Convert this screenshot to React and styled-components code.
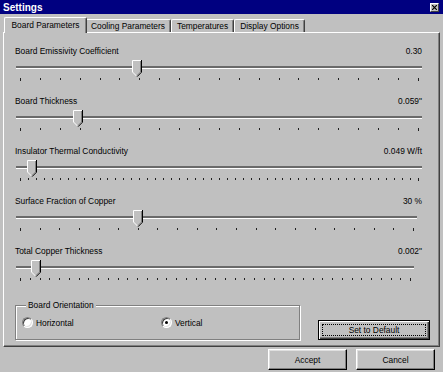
import React from 'react';
import styled, { createGlobalStyle } from 'styled-components';

const GlobalStyle = createGlobalStyle`
    html, body {
        margin: 0;
        padding: 0;
        background: #c0c0c0;
    }
    body {
        font-family: "Liberation Sans", Arial, sans-serif;
        font-size: 8.4px;
        color: #000;
    }
`;

const Window = styled.div`
    width: 443px;
    height: 372px;
    background: #c0c0c0;
    display: flex;
    flex-direction: column;
    overflow: hidden;
`;

const TitleBar = styled.div`
    height: 14px;
    background: #000080;
    color: #fff;
    font-weight: bold;
    font-size: 10px;
    display: flex;
    align-items: center;
    justify-content: space-between;
    padding: 0 4px 0 3px;
`;

const CloseButton = styled.div`
    width: 9px;
    height: 9px;
    box-sizing: border-box;
    background: #c0c0c0;
    border: 1px solid;
    border-color: #fff #404040 #404040 #fff;
    display: flex;
    align-items: center;
    justify-content: center;
`;

const Body = styled.div`
    padding: 3px 3px 0 3px;
`;

const TabStrip = styled.div`
    display: flex;
    align-items: flex-end;
    height: 15px;
    padding-left: 3px;
    position: relative;
    z-index: 1;
`;

const Tab = styled.div`
    box-sizing: border-box;
    height: ${p => (p.active ? '16px' : '13px')};
    margin: 0 ${p => (p.active ? '-2px' : '0')} ${p => (p.active ? '-1px' : '0')};
    padding: 0 ${p => (p.active ? '6.5px' : '5px')};
    background: #c0c0c0;
    border-left: 1px solid #fff;
    border-top: 1px solid #fff;
    border-right: 1px solid #404040;
    box-shadow: inset -1px 0 0 #808080;
    border-radius: 2px 2px 0 0;
    display: flex;
    align-items: ${p => (p.active ? 'flex-start' : 'center')};
    padding-top: ${p => (p.active ? '2px' : '0')};
    position: relative;
    z-index: ${p => (p.active ? 2 : 0)};
    white-space: nowrap;
`;

const Panel = styled.div`
    box-sizing: border-box;
    height: 315px;
    border-left: 1px solid #fff;
    border-top: 1px solid #fff;
    border-right: 1px solid #404040;
    border-bottom: 1px solid #404040;
    box-shadow: inset -1px -1px 0 #808080;
    padding: 12px 17px 0 11px;
    display: flex;
    flex-direction: column;
`;

const SliderBlock = styled.div`
    height: 50px;
    display: flex;
    flex-direction: column;
`;

const LabelRow = styled.div`
    height: 12px;
    line-height: 12px;
    display: flex;
    justify-content: space-between;
    white-space: nowrap;
`;

const TrackArea = styled.div`
    position: relative;
    height: 17px;
    margin: 3px 0 0 1px;
    width: ${p => p.width}px;
`;

const Track = styled.div`
    margin-top: 6px;
    height: 2px;
    background: #6a6a6a;
    border-bottom: 1px solid #fff;
`;

const ThumbWrap = styled.div`
    position: absolute;
    top: 0;
    width: 10px;
    height: 17px;
`;

const Ticks = styled.div`
    box-sizing: border-box;
    display: flex;
    justify-content: space-between;
    align-items: flex-start;
    margin: 1px 0 0 1px;
    padding: 0 3px 0 4px;
    width: ${p => p.width}px;
`;

const Tick = styled.div`
    width: 1px;
    height: ${p => (p.end ? '3px' : '2px')};
    background: #202020;
`;

const BottomRow = styled.div`
    display: flex;
    justify-content: space-between;
    align-items: flex-end;
    margin: 4px -8px 0 0;
`;

const GroupBox = styled.fieldset`
    box-sizing: border-box;
    width: 285px;
    height: 41px;
    margin: 0;
    padding: 0 6px;
    min-width: 0;
    border: 1px solid #808080;
    box-shadow: 1px 1px 0 #fff, inset 1px 1px 0 #fff;
`;

const Legend = styled.legend`
    padding: 0 2px;
    margin-left: 4px;
    line-height: 12px;
    background: #c0c0c0;
`;

const RadioRow = styled.div`
    display: flex;
    align-items: center;
    padding-top: 6px;
`;

const RadioOption = styled.label`
    display: flex;
    align-items: center;
    gap: 3px;
    width: ${p => p.width}px;
`;

const RadioCircle = styled.span`
    box-sizing: border-box;
    width: 11px;
    height: 11px;
    border-radius: 50%;
    border: 1px solid;
    border-color: #808080 #fff #fff #808080;
    box-shadow: inset 1px 1px 0 #404040, inset -1px -1px 0 #dfdfdf;
    background: #fff;
    display: flex;
    align-items: center;
    justify-content: center;
    &::after {
        content: "";
        width: 3px;
        height: 3px;
        border-radius: 50%;
        background: ${p => (p.checked ? '#000' : 'transparent')};
    }
`;

const Button = styled.div`
    box-sizing: border-box;
    width: ${p => p.width}px;
    height: ${p => p.height}px;
    background: #c0c0c0;
    border: 1px solid;
    border-color: #fff #000 #000 #fff;
    box-shadow: inset -1px -1px 0 #808080, inset 1px 1px 0 #dfdfdf;
    display: flex;
    align-items: center;
    justify-content: center;
`;

const DefaultButton = styled(Button)`
    border: 1px solid #000;
    box-shadow: inset 1px 1px 0 #fff, inset -1px -1px 0 #404040, inset -2px -2px 0 #808080;
    padding: 3px;
    align-items: stretch;
    justify-content: stretch;
`;

const FocusRing = styled.span`
    flex: 1;
    border: 1px dotted #000;
    display: flex;
    align-items: center;
    justify-content: center;
`;

const DialogButtons = styled.div`
    display: flex;
    justify-content: flex-end;
    gap: 9px;
    padding: 2px 5px 0 0;
`;

const sliders = [
    { label: 'Board Emissivity Coefficient', value: '0.30', pos: 116, ticks: 21, width: 406 },
    { label: 'Board Thickness', value: '0.059"', pos: 57, ticks: 21, width: 406 },
    { label: 'Insulator Thermal Conductivity', value: '0.049 W/ft', pos: 11, ticks: 51, width: 406 },
    { label: 'Surface Fraction of Copper', value: '30 %', pos: 117, ticks: 21, width: 401 },
    { label: 'Total Copper Thickness', value: '0.002"', pos: 15, ticks: 41, width: 398 },
];

const tabs = ['Board Parameters', 'Cooling Parameters', 'Temperatures', 'Display Options'];

function Thumb({ left }) {
    return <ThumbWrap style={{ left }}>
        <svg width="10" height="17" viewBox="0 0 10 17">
            <polygon points="0,0 10,0 10,12 5,17 0,12" fill="#c0c0c0" />
            <polyline points="0.5,12 0.5,0.5 9,0.5" fill="none" stroke="#fff" />
            <line x1="0.5" y1="12" x2="5" y2="16.5" stroke="#fff" />
            <polyline points="9.5,0 9.5,12.2 5,16.7" fill="none" stroke="#000" />
            <polyline points="8.5,1 8.5,12 5,15.5" fill="none" stroke="#808080" />
        </svg>
    </ThumbWrap>;
}

function Slider({ label, value, pos, ticks, width }) {
    return <SliderBlock>
        <LabelRow>
            <span>{label}</span>
            <span>{value}</span>
        </LabelRow>
        <TrackArea width={width}>
            <Track />
            <Thumb left={pos} />
        </TrackArea>
        <Ticks width={width}>
            {Array.from({ length: ticks }, (_, i) =>
                <Tick key={i} end={i === 0 || i === ticks - 1} />
            )}
        </Ticks>
    </SliderBlock>;
}

function App() {
    return <Window>
        <GlobalStyle />
        <TitleBar>
            <span>Settings</span>
            <CloseButton>
                <svg width="5" height="5" viewBox="0 0 5 5">
                    <path d="M0 0 L5 5 M5 0 L0 5" stroke="#000" strokeWidth="1.2" />
                </svg>
            </CloseButton>
        </TitleBar>
        <Body>
            <TabStrip>
                {tabs.map((t, i) => <Tab key={t} active={i === 0}>{t}</Tab>)}
            </TabStrip>
            <Panel>
                {sliders.map(s => <Slider key={s.label} {...s} />)}
                <BottomRow>
                    <GroupBox>
                        <Legend>Board Orientation</Legend>
                        <RadioRow>
                            <RadioOption width={139}>
                                <RadioCircle />
                                Horizontal
                            </RadioOption>
                            <RadioOption width={80}>
                                <RadioCircle checked />
                                Vertical
                            </RadioOption>
                        </RadioRow>
                    </GroupBox>
                    <DefaultButton width={112} height={20}>
                        <FocusRing>Set to Default</FocusRing>
                    </DefaultButton>
                </BottomRow>
            </Panel>
            <DialogButtons>
                <Button width={79} height={21}>Accept</Button>
                <Button width={79} height={21}>Cancel</Button>
            </DialogButtons>
        </Body>
    </Window>;
}

export default App;
